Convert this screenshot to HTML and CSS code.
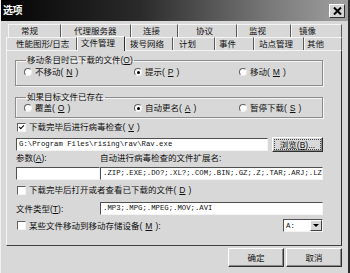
FILE: index.html
```html
<!DOCTYPE html>
<html lang="zh-CN">
<head>
    <meta charset="UTF-8">
    <title>选项</title>
    <link rel="stylesheet" href="styles.css">
</head>
<body>
    <div class="dialog">
        <div class="titlebar">
            <span class="title">选项</span>
            <button class="close-btn" aria-label="关闭">
                <svg width="9" height="8" viewBox="0 0 9 8">
                    <path d="M1 0.5 L8 7.5 M8 0.5 L1 7.5" stroke="#000" stroke-width="2"/>
                </svg>
            </button>
        </div>

        <!-- two rows of tabs, the lower row holds the active one -->
        <div class="tabs">
            <div class="tab-row row-back">
                <span class="tab">常规</span>
                <span class="tab">代理服务器</span>
                <span class="tab">连接</span>
                <span class="tab">协议</span>
                <span class="tab">监视</span>
                <span class="tab">镜像</span>
            </div>
            <div class="tab-row row-front">
                <span class="tab">性能图形/日志</span>
                <span class="tab active">文件管理</span>
                <span class="tab">拨号网络</span>
                <span class="tab">计划</span>
                <span class="tab">事件</span>
                <span class="tab">站点管理</span>
                <span class="tab">其他</span>
            </div>
        </div>

        <div class="panel">
            <fieldset class="group group-move">
                <legend>移动条目时已下载的文件(<u>O</u>)</legend>
                <div class="radio-row">
                    <label class="radio"><span class="dot"></span>不移动(<u>N</u>)</label>
                    <label class="radio checked"><span class="dot"></span>提示(<u>P</u>)</label>
                    <label class="radio"><span class="dot"></span>移动(<u>M</u>)</label>
                </div>
            </fieldset>

            <fieldset class="group group-exist">
                <legend>如果目标文件已存在</legend>
                <div class="radio-row">
                    <label class="radio"><span class="dot"></span>覆盖(<u>O</u>)</label>
                    <label class="radio checked"><span class="dot"></span>自动更名(<u>A</u>)</label>
                    <label class="radio"><span class="dot"></span>暂停下载(<u>S</u>)</label>
                </div>
            </fieldset>

            <label class="check checked row-virus"><span class="box"></span>下载完毕后进行病毒检查(<u>V</u>)</label>

            <div class="path-row">
                <div class="field">G:\Program Files\rising\rav\Rav.exe</div>
                <button class="btn browse">浏览(<u>B</u>)...</button>
            </div>

            <div class="two-col labels">
                <span>参数(<u>A</u>):</span>
                <span>自动进行病毒检查的文件扩展名:</span>
            </div>
            <div class="two-col inputs">
                <div class="field"></div>
                <div class="field">.ZIP;.EXE;.DO?;.XL?;.COM;.BIN;.GZ;.Z;.TAR;.ARJ;.LZ</div>
            </div>

            <label class="check row-open"><span class="box"></span>下载完毕后打开或者查看已下载的文件(<u>D</u>)</label>

            <div class="two-col types">
                <span>文件类型(<u>T</u>):</span>
                <div class="field">.MP3;.MPG;.MPEG;.MOV;.AVI</div>
            </div>

            <div class="device-row">
                <label class="check"><span class="box"></span>某些文件移动到移动存储设备(<u>M</u>):</label>
                <div class="select">
                    <span class="select-value">A:</span>
                    <span class="select-arrow"></span>
                </div>
            </div>
        </div>

        <div class="footer">
            <button class="btn">确定</button>
            <button class="btn">取消</button>
        </div>
    </div>
</body>
</html>
```

FILE: styles.css
```css
* {
    box-sizing: border-box;
}

body {
    margin: 0;
    background: #d8d8d8;
    font-family: "Liberation Sans", "Noto Sans CJK SC", sans-serif;
    font-size: 8.5px;
    line-height: 10px;
    color: #111;
}

u {
    text-decoration: underline;
}

.dialog {
    width: 350px;
    height: 273px;
    background: #d8d8d8;
    border-right: 2px solid #2a2a2a;
    border-left: 1px solid #f0f0f0;
}

/* title bar */
.titlebar {
    height: 21px;
    display: flex;
    align-items: center;
    justify-content: space-between;
    padding: 0 3px 0 2px;
    background: linear-gradient(to right, #050505 0%, #2a2a2a 40%, #7a7a7a 78%, #a0a0a0 100%);
}

.title {
    color: #fff;
    font-size: 10px;
    font-weight: bold;
    letter-spacing: -0.5px;
}

.close-btn {
    width: 16px;
    height: 14px;
    padding: 0;
    display: flex;
    align-items: center;
    justify-content: center;
    background: #d4d4d4;
    border: 1px solid;
    border-color: #fff #303030 #303030 #fff;
}

/* tabs */
.tabs {
    padding-top: 3px;
}

.tab-row {
    display: flex;
    height: 13px;
}

.row-back {
    margin-left: 7px;
}

.row-front {
    margin-left: 5px;
}

.tab {
    display: block;
    height: 13px;
    line-height: 12px;
    white-space: nowrap;
    border-top: 1px solid #f4f4f4;
    border-left: 1px solid #f4f4f4;
    border-right: 1px solid #5a5a5a;
}

.row-back .tab:nth-child(1) { width: 53px; padding-left: 12px; }
.row-back .tab:nth-child(2) { width: 70px; padding-left: 12px; }
.row-back .tab:nth-child(3) { width: 47px; padding-left: 11px; }
.row-back .tab:nth-child(4) { width: 59px; padding-left: 17px; }
.row-back .tab:nth-child(5) { width: 54px; padding-left: 11px; }
.row-back .tab:nth-child(6) { width: 51px; padding-left: 7px; }

.row-front .tab:nth-child(1) { width: 71px; padding-left: 9px; }
.row-front .tab:nth-child(2) { width: 48px; padding-left: 3px; }
.row-front .tab:nth-child(3) { width: 48px; padding-left: 4px; }
.row-front .tab:nth-child(4) { width: 42px; padding-left: 5px; }
.row-front .tab:nth-child(5) { width: 39px; padding-left: 3px; }
.row-front .tab:nth-child(6) { width: 50px; padding-left: 4px; }
.row-front .tab:nth-child(7) { width: 38px; padding-left: 2px; }

.tab.active {
    position: relative;
    z-index: 1;
    height: 15px;
    margin-top: -1px;
    background: #d8d8d8;
    border-top-color: #fff;
    border-left-color: #fff;
    border-right-color: #303030;
}

/* panel */
.panel {
    height: 196px;
    margin: 0 6px 0 5px;
    padding: 4px 18px 0 9px;
    border: 1px solid;
    border-color: #f4f4f4 #303030 #404040 #f4f4f4;
}

.group {
    margin: 0 0 0 -1px;
    padding: 0 8px 0 8px;
    border: 1px solid #8c8c8c;
    box-shadow: 1px 1px 0 #f4f4f4, inset 1px 1px 0 #f4f4f4;
}

.group legend {
    padding: 0 1px;
    margin-left: 2px;
    line-height: 10px;
}

.group-move {
    height: 31px;
}

.group-exist {
    height: 26px;
    margin-top: 6px;
}

.radio-row {
    display: grid;
    grid-template-columns: 110px 105px 1fr;
    height: 12px;
    align-items: center;
    margin-top: 1px;
}

.group-exist .radio-row {
    margin-top: 0;
}

.radio,
.check {
    display: flex;
    align-items: center;
    gap: 3px;
    white-space: nowrap;
}

.dot {
    width: 8px;
    height: 8px;
    border-radius: 50%;
    background: #fff;
    border: 1px solid;
    border-color: #606060 #f0f0f0 #f0f0f0 #606060;
    display: flex;
    align-items: center;
    justify-content: center;
}

.radio.checked .dot::after {
    content: "";
    width: 3px;
    height: 3px;
    border-radius: 50%;
    background: #000;
}

.box {
    width: 9px;
    height: 9px;
    background: #fff;
    border: 1px solid;
    border-color: #606060 #f4f4f4 #f4f4f4 #606060;
    display: flex;
    align-items: center;
    justify-content: center;
}

.check.checked .box::after {
    content: "";
    width: 4px;
    height: 2px;
    margin-top: -2px;
    border-left: 1.5px solid #000;
    border-bottom: 1.5px solid #000;
    transform: rotate(-45deg);
}

.row-virus {
    height: 12px;
    margin-top: 3px;
    margin-left: 1px;
}

.path-row {
    display: grid;
    grid-template-columns: 1fr 51px;
    gap: 4px;
    align-items: center;
    height: 15px;
    margin-top: 4px;
}

.field {
    height: 13px;
    background: #fff;
    border: 1px solid;
    border-color: #505050 #f4f4f4 #f4f4f4 #505050;
    padding-left: 2px;
    font-family: "Liberation Mono", monospace;
    font-size: 7.3px;
    line-height: 11px;
    white-space: nowrap;
    overflow: hidden;
}

.btn {
    font-family: inherit;
    font-size: 8.5px;
    line-height: 10px;
    color: #111;
    padding: 0;
    background: #d8d8d8;
    border: 1px solid;
    border-color: #fff #303030 #303030 #fff;
    box-shadow: inset -1px -1px 0 #8a8a8a;
}

.browse {
    height: 15px;
    outline: 1px dotted #444;
    outline-offset: -3px;
}

.two-col {
    display: grid;
    grid-template-columns: 84px 1fr;
    align-items: center;
}

.labels {
    height: 10px;
    margin-top: 1px;
}

.inputs {
    margin-top: 4px;
}

.row-open {
    height: 12px;
    margin-top: 4px;
    margin-left: 1px;
}

.types {
    margin-top: 6px;
}

.device-row {
    display: flex;
    justify-content: space-between;
    align-items: center;
    height: 13px;
    margin-top: 4px;
    margin-left: 1px;
}

.select {
    width: 40px;
    height: 13px;
    display: flex;
    align-items: center;
    justify-content: space-between;
    background: #fff;
    border: 1px solid;
    border-color: #505050 #f4f4f4 #f4f4f4 #505050;
    padding-left: 2px;
    font-family: "Liberation Mono", monospace;
    font-size: 7.3px;
}

.select-arrow {
    width: 12px;
    height: 11px;
    display: flex;
    align-items: center;
    justify-content: center;
    background: #d8d8d8;
    border: 1px solid;
    border-color: #fff #404040 #404040 #fff;
}

.select-arrow::after {
    content: "";
    border-left: 3px solid transparent;
    border-right: 3px solid transparent;
    border-top: 3px solid #000;
}

/* bottom buttons */
.footer {
    display: flex;
    justify-content: flex-end;
    gap: 2px;
    padding: 2px 6px 0 0;
}

.footer .btn {
    width: 56px;
    height: 19px;
}
```
